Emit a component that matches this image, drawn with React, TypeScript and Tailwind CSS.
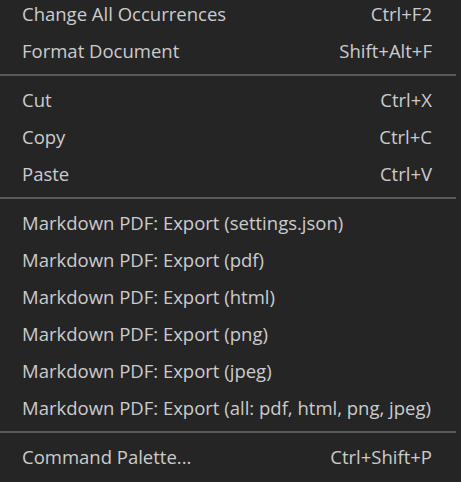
import React from "react";

type Item = { label: string; keys?: string } | "sep";

// Context menu entries, top to bottom
const items: Item[] = [
  { label: "Change All Occurrences", keys: "Ctrl+F2" },
  { label: "Format Document", keys: "Shift+Alt+F" },
  "sep",
  { label: "Cut", keys: "Ctrl+X" },
  { label: "Copy", keys: "Ctrl+C" },
  { label: "Paste", keys: "Ctrl+V" },
  "sep",
  { label: "Markdown PDF: Export (settings.json)" },
  { label: "Markdown PDF: Export (pdf)" },
  { label: "Markdown PDF: Export (html)" },
  { label: "Markdown PDF: Export (png)" },
  { label: "Markdown PDF: Export (jpeg)" },
  { label: "Markdown PDF: Export (all: pdf, html, png, jpeg)" },
  "sep",
  { label: "Command Palette...", keys: "Ctrl+Shift+P" },
];

const App = () => {
  return (
    <div className="w-[461px] h-[482px] overflow-hidden bg-[#252526] text-[#cccccc] pr-[5px] font-['Open_Sans','Noto_Sans',sans-serif]">
      <div className="-mt-[5px] flex flex-col">
        {items.map((item, idx) =>
          item === "sep" ? (
            <div key={idx} className="py-[5px]">
              <div className="h-[2px] bg-[#5a5a5a]" />
            </div>
          ) : (
            <div
              key={idx}
              className="h-[37px] flex items-center justify-between pl-[22px] pr-[24px] text-[18.5px] whitespace-nowrap"
            >
              <span>{item.label}</span>
              {item.keys && <span>{item.keys}</span>}
            </div>
          )
        )}
      </div>
    </div>
  );
};

export default App;
